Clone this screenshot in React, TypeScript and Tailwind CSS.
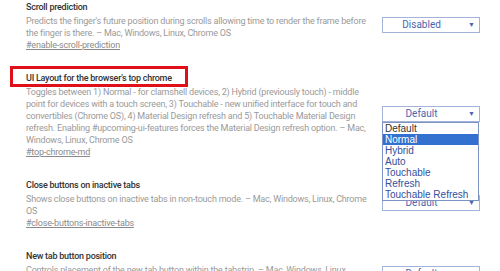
import React from "react"

type Flag = {
  title: string
  description: string
  link: string
  value: string
  highlight?: boolean
  open?: boolean
}

const flags: Flag[] = [
  {
    title: "Scroll prediction",
    description:
      "Predicts the finger's future position during scrolls allowing time to render the frame before the finger is there. – Mac, Windows, Linux, Chrome OS",
    link: "#enable-scroll-prediction",
    value: "Disabled",
  },
  {
    title: "UI Layout for the browser's top chrome",
    description:
      "Toggles between 1) Normal - for clamshell devices, 2) Hybrid (previously touch) - middle point for devices with a touch screen, 3) Touchable - new unified interface for touch and convertibles (Chrome OS), 4) Material Design refresh and 5) Touchable Material Design refresh. Enabling #upcoming-ui-features forces the Material Design refresh option. – Mac, Windows, Linux, Chrome OS",
    link: "#top-chrome-md",
    value: "Default",
    highlight: true,
    open: true,
  },
  {
    title: "Close buttons on inactive tabs",
    description:
      "Shows close buttons on inactive tabs in non-touch mode. – Mac, Windows, Linux, Chrome OS",
    link: "#close-buttons-inactive-tabs",
    value: "Default",
  },
  {
    title: "New tab button position",
    description:
      "Controls placement of the new tab button within the tabstrip. – Mac, Windows, Linux, Chrome OS",
    link: "#new-tab-button-position",
    value: "Default",
  },
]

const options = ["Default", "Normal", "Hybrid", "Auto", "Touchable", "Refresh", "Touchable Refresh"]

function Select({ value, open }: { value: string; open?: boolean }) {
  return (
    <div className="relative w-[98px] shrink-0">
      <div className="flex h-[16px] items-center border border-[#a3b3d9] bg-white text-[10px] text-[#4a66ad]">
        <span className="flex-1 pr-[8px] text-center leading-none">{value}</span>
        <span className="pr-[4px] text-[7px] leading-none text-[#4a66ad]">▼</span>
      </div>
      {open && (
        <ul className="absolute left-0 top-[16px] z-10 w-[97px] border border-[#7d93c4] bg-white font-['Liberation_Sans',Arial,sans-serif] text-[10px] leading-[11px]">
          {options.map((o, i) => (
            <li
              key={o}
              className={
                i === 1
                  ? "bg-[#3271cf] pl-[2px] text-white"
                  : i === 0
                    ? "pl-[2px] text-[#333]"
                    : "pl-[2px] text-[#34509c]"
              }
            >
              {o}
            </li>
          ))}
        </ul>
      )}
    </div>
  )
}

export default function App() {
  return (
    <div className="h-[271px] w-[500px] overflow-hidden bg-white font-['Roboto',sans-serif]">
      <div className="-mt-px flex flex-col gap-[19px] pl-[26px] pr-[20px]">
        {flags.map((f) => (
          <div key={f.link} className="flex items-center justify-between">
            <div className="w-[342px]">
              <div className="relative w-fit text-[9px] font-medium leading-[16px] tracking-[-0.25px] text-[#333]">
                {f.title}
                {f.highlight && (
                  <span className="absolute left-[-16px] top-[-4px] h-[21px] w-[178px] border-[3px] border-[#e0101a]" />
                )}
              </div>
              <p className="text-[9px] leading-[12px] tracking-[-0.2px] text-[#9a9a9a]">{f.description}</p>
              <a className="block w-fit text-[9px] leading-[12px] tracking-[-0.2px] text-[#8a8a8a] underline">{f.link}</a>
            </div>
            <Select value={f.value} open={f.open} />
          </div>
        ))}
      </div>
    </div>
  )
}
